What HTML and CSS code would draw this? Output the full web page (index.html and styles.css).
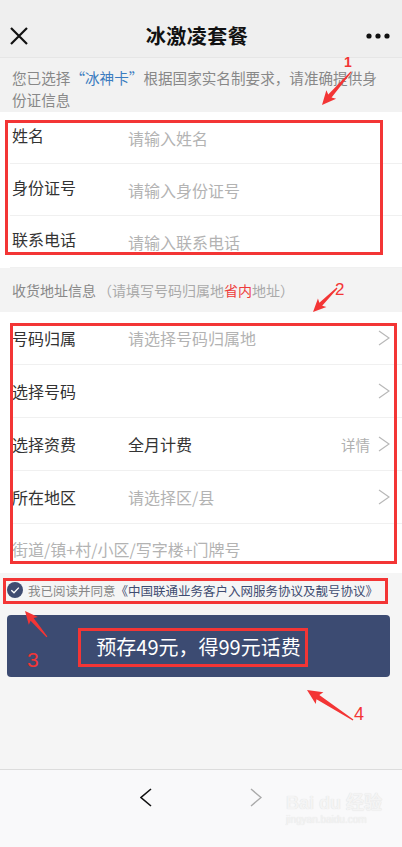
FILE: index.html
```html
<!DOCTYPE html>
<html lang="zh-CN">
<head>
    <meta charset="UTF-8">
    <meta name="viewport" content="width=device-width, initial-scale=1.0">
    <title>冰激凌套餐</title>
    <link rel="stylesheet" href="styles.css">
</head>
<body>

<div class="page">
    <div class="topbar">
        <svg class="close" width="18" height="18" viewBox="0 0 18 18">
            <path d="M1 1 L17 17 M17 1 L1 17" stroke="#111" stroke-width="2.2" fill="none"/>
        </svg>
        <h1>冰激凌套餐</h1>
        <svg class="more" width="24" height="6" viewBox="0 0 24 6">
            <circle cx="3" cy="3" r="2.6" fill="#111"/>
            <circle cx="12" cy="3" r="2.6" fill="#111"/>
            <circle cx="21" cy="3" r="2.6" fill="#111"/>
        </svg>
    </div>

    <p class="notice">您已选择<span class="blue">“冰神卡”</span>根据国家实名制要求，请准确提供身份证信息</p>

    <div class="group">
        <div class="row row-input">
            <span class="label">姓名</span>
            <input type="text" placeholder="请输入姓名">
        </div>
        <div class="row row-input">
            <span class="label">身份证号</span>
            <input type="text" placeholder="请输入身份证号">
        </div>
        <div class="row row-input">
            <span class="label">联系电话</span>
            <input type="text" placeholder="请输入联系电话">
        </div>
    </div>

    <div class="group-title">收货地址信息 <span class="hint">（请填写号码归属地<span class="red">省内</span>地址）</span></div>

    <div class="group">
        <div class="row">
            <span class="label">号码归属</span>
            <span class="value placeholder">请选择号码归属地</span>
            <svg class="arrow" width="12" height="16" viewBox="0 0 12 16"><polyline points="1,1 11,8 1,15" fill="none" stroke="#b8b8b8" stroke-width="1.2"/></svg>
        </div>
        <div class="row">
            <span class="label">选择号码</span>
            <span class="value"></span>
            <svg class="arrow" width="12" height="16" viewBox="0 0 12 16"><polyline points="1,1 11,8 1,15" fill="none" stroke="#b8b8b8" stroke-width="1.2"/></svg>
        </div>
        <div class="row">
            <span class="label">选择资费</span>
            <span class="value">全月计费</span>
            <span class="detail">详情</span>
            <svg class="arrow" width="12" height="16" viewBox="0 0 12 16"><polyline points="1,1 11,8 1,15" fill="none" stroke="#b8b8b8" stroke-width="1.2"/></svg>
        </div>
        <div class="row">
            <span class="label">所在地区</span>
            <span class="value placeholder">请选择区/县</span>
            <svg class="arrow" width="12" height="16" viewBox="0 0 12 16"><polyline points="1,1 11,8 1,15" fill="none" stroke="#b8b8b8" stroke-width="1.2"/></svg>
        </div>
        <div class="row row-last">
            <span class="placeholder">街道/镇+村/小区/写字楼+门牌号</span>
        </div>
    </div>

    <div class="agree">
        <svg class="check" width="16" height="16" viewBox="0 0 16 16">
            <circle cx="8" cy="8" r="8" fill="#3f4c71"/>
            <polyline points="4.3,8.2 7,10.8 11.8,5.6" fill="none" stroke="#fff" stroke-width="1.3"/>
        </svg>
        <span class="agree-text">我已阅读并同意</span><span class="agree-link">《中国联通业务客户入网服务协议及靓号协议》</span>
    </div>

    <button class="submit">预存49元，得99元话费</button>

    <div class="spacer"></div>

    <div class="toolbar">
        <svg width="12" height="19" viewBox="0 0 12 19"><polyline points="11,1 1,9.5 11,18" fill="none" stroke="#111" stroke-width="1.6"/></svg>
        <svg width="12" height="19" viewBox="0 0 12 19"><polyline points="1,1 11,9.5 1,18" fill="none" stroke="#aaa" stroke-width="1.4"/></svg>
        <div class="watermark">Bai du 经验<small>jingyan.baidu.com</small></div>
    </div>

    <!-- red annotations drawn over the screenshot -->
    <svg class="marks" width="402" height="847" viewBox="0 0 402 847">
        <g fill="none" stroke="#f33535" stroke-width="3">
            <rect x="6.5" y="121.5" width="375" height="132"/>
            <rect x="11.5" y="324.5" width="384" height="238"/>
            <rect x="4.5" y="579.5" width="382" height="23"/>
            <rect x="79.5" y="629.5" width="227" height="36"/>
        </g>
        <g fill="#f33535">
            <polygon transform="translate(322 105) rotate(131.3)" points="0,0 -14,-6.5 -12,-2.2 -44,-0.6 -44,0.6 -12,2.2 -14,6.5"/>
            <polygon transform="translate(313 312) rotate(135)" points="0,0 -13,-6 -11,-2 -34,-0.6 -34,0.6 -11,2 -13,6"/>
            <polygon transform="translate(25 611) rotate(-130.2)" points="0,0 -13,-6 -11,-2 -34,-0.6 -34,0.6 -11,2 -13,6"/>
            <polygon transform="translate(307 690) rotate(-146.9)" points="0,0 -15,-7 -13,-2.6 -55,-0.6 -55,0.6 -13,2.6 -15,7"/>
        </g>
        <g fill="#f33535" font-family="Liberation Sans, sans-serif">
            <text x="344" y="67" font-size="14" font-weight="bold">1</text>
            <text x="335" y="295" font-size="17">2</text>
            <text x="27" y="667" font-size="21">3</text>
            <text x="354" y="720" font-size="18">4</text>
        </g>
    </svg>
</div>

</body>
</html>
```

FILE: styles.css
```css
body {
    margin: 0;
    padding: 0;
    font-family: "Noto Sans CJK SC", "Noto Sans", sans-serif;
    background-color: #f5f5f5;
    color: #333;
}
.page {
    position: relative;
    width: 402px;
    height: 847px;
    display: flex;
    flex-direction: column;
    overflow: hidden;
}
.topbar {
    padding: 14px 12px 0 10px;
    display: flex;
    align-items: center;
    justify-content: space-between;
    background-color: #efefef;
    border-bottom: 1px solid #e6e6e6;
    box-sizing: content-box;
    height: 43px;
}
.topbar h1 {
    margin: 0;
    font-size: 20px;
    font-weight: bold;
    color: #111;
    letter-spacing: 0.5px;
}
.notice {
    margin: 0;
    padding: 9px 12px 1px 12px;
    font-size: 14.6px;
    line-height: 22px;
    color: #888;
    background-color: #f2f2f2;
}
.blue {
    color: #3b7cc0;
}
.group {
    background-color: #fff;
}
.row {
    height: 53px;
    margin-left: 10px;
    padding: 0 12px 0 2px;
    display: flex;
    align-items: center;
    border-bottom: 1px solid #f0f0f0;
    box-sizing: border-box;
    font-size: 16px;
}
.row-input {
    height: 52px;
    align-items: flex-start;
}
.row-input .label {
    margin-top: 11px;
}
.row-input input {
    margin-top: 14px;
}
.row-last {
    border-bottom: none;
    height: 49px;
}
.label {
    width: 116px;
    flex-shrink: 0;
    color: #333;
}
.value {
    flex-grow: 1;
    color: #333;
}
.placeholder {
    color: #b3b3b3;
}
.detail {
    font-size: 14.5px;
    color: #b0b0b0;
    margin-right: 8px;
}
input {
    flex-grow: 1;
    border: none;
    outline: none;
    padding: 0;
    font-family: inherit;
    font-size: 16px;
    background: transparent;
}
input::placeholder {
    color: #b3b3b3;
}
.group-title {
    height: 44px;
    padding-left: 12px;
    display: flex;
    align-items: center;
    font-size: 14px;
    color: #888;
    background-color: #f3f3f3;
}
.hint {
    color: #aaa;
    margin-left: 2px;
}
.red {
    color: #ee3b3b;
}
.agree {
    margin: 9px 0 17px 7px;
    height: 16px;
    display: flex;
    align-items: center;
    font-size: 12.5px;
    white-space: nowrap;
}
.check {
    margin-right: 5px;
    flex-shrink: 0;
}
.agree-text {
    color: #888;
}
.agree-link {
    color: #3f4c71;
}
.submit {
    margin-left: 7px;
    width: 383px;
    height: 62px;
    border: none;
    border-radius: 4px;
    background-color: #3c4b72;
    color: #fff;
    font-family: inherit;
    font-size: 20px;
    padding: 0;
}
.spacer {
    flex-grow: 1;
}
.toolbar {
    position: relative;
    border-top: 1px solid #dcdcdc;
    background-color: #f9f9fa;
    display: flex;
    justify-content: center;
    gap: 98px;
    padding-top: 18px;
    box-sizing: border-box;
    height: 78px;
}
.watermark {
    position: absolute;
    left: 286px;
    top: 22px;
    font-family: "Liberation Sans", sans-serif;
    font-size: 18px;
    font-weight: bold;
    color: #f4f4f4;
    text-shadow: 0 0 1px #dadada;
    line-height: 22px;
    white-space: nowrap;
}
.watermark small {
    display: block;
    font-size: 10px;
    line-height: 12px;
    font-weight: normal;
}
.marks {
    position: absolute;
    left: 0;
    top: 0;
    pointer-events: none;
}
```
